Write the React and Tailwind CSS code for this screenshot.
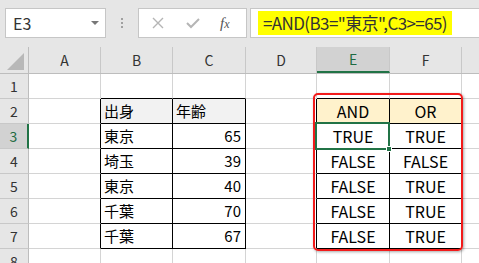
import React from 'react'

const cols = [
  { k: 'A', w: 'w-[72px]' },
  { k: 'B', w: 'w-[72px]' },
  { k: 'C', w: 'w-[73px]' },
  { k: 'D', w: 'w-[71px]' },
  { k: 'E', w: 'w-[73px]' },
  { k: 'F', w: 'w-[72px]' },
  { k: 'G', w: 'w-[72px]' },
]

const cells = {
  B2: { t: '出身', a: 'l' }, C2: { t: '年齢', a: 'l' },
  B3: { t: '東京', a: 'l' }, C3: { t: '65', a: 'r' },
  B4: { t: '埼玉', a: 'l' }, C4: { t: '39', a: 'r' },
  B5: { t: '東京', a: 'l' }, C5: { t: '40', a: 'r' },
  B6: { t: '千葉', a: 'l' }, C6: { t: '70', a: 'r' },
  B7: { t: '千葉', a: 'l' }, C7: { t: '67', a: 'r' },
  E2: { t: 'AND', a: 'c' }, F2: { t: 'OR', a: 'c' },
  E3: { t: 'TRUE', a: 'c' }, F3: { t: 'TRUE', a: 'c' },
  E4: { t: 'FALSE', a: 'c' }, F4: { t: 'FALSE', a: 'c' },
  E5: { t: 'FALSE', a: 'c' }, F5: { t: 'TRUE', a: 'c' },
  E6: { t: 'FALSE', a: 'c' }, F6: { t: 'TRUE', a: 'c' },
  E7: { t: 'FALSE', a: 'c' }, F7: { t: 'TRUE', a: 'c' },
}

const rows = [1, 2, 3, 4, 5, 6, 7, 8]
const tableCols = ['B', 'C', 'E', 'F']
const inTable = (c, r) => r >= 2 && r <= 7 && tableCols.includes(c)

const Cell = ({ c, ci, r }) => {
  const next = cols[ci + 1] ? cols[ci + 1].k : null
  const rb = inTable(c.k, r) || (next && inTable(next, r))
  const bb = inTable(c.k, r) || inTable(c.k, r + 1)
  const d = cells[c.k + r]
  let bg = 'bg-white'
  if (r === 2 && (c.k === 'B' || c.k === 'C')) bg = 'bg-[#f2f2f2]'
  if (r === 2 && (c.k === 'E' || c.k === 'F')) bg = 'bg-[#fff2cc]'
  const align = !d ? '' : d.a === 'l' ? 'justify-start pl-[3px] text-[15px]' : d.a === 'r' ? 'justify-end pr-[4px] text-[15px]' : 'justify-center text-[16px]'
  return (
    <div
      className={`${c.w} shrink-0 h-full flex items-center border-r border-b ${rb ? 'border-r-black' : 'border-r-[#d4d4d4]'} ${bb ? 'border-b-black' : 'border-b-[#d4d4d4]'} ${bg} ${align} text-black`}
    >
      {d ? d.t : ''}
    </div>
  )
}

export default function App() {
  return (
    <div className="relative w-[479px] h-[263px] overflow-hidden bg-white" style={{ fontFamily: '"Noto Sans CJK JP", "Noto Sans", sans-serif' }}>
      {/* toolbar */}
      <div className="h-[47px] bg-[#e6e6e6] flex items-start pt-[8px] pl-[5px]">
        <div className="w-[101px] h-[30px] bg-white border border-[#c6c6c6] flex items-center justify-between pl-[7px] pr-[6px]">
          <span className="text-[16px] text-[#333]">E3</span>
          <span className="w-0 h-0 border-l-[4px] border-r-[4px] border-t-[4px] border-l-transparent border-r-transparent border-t-[#777]"></span>
        </div>
        <div className="w-[32px] h-[30px] flex flex-col items-center justify-center gap-[2px]">
          <span className="w-[2px] h-[2px] bg-[#a0a0a0]"></span>
          <span className="w-[2px] h-[2px] bg-[#a0a0a0]"></span>
          <span className="w-[2px] h-[2px] bg-[#a0a0a0]"></span>
        </div>
        <div className="w-[109px] h-[30px] bg-white border border-[#c6c6c6] flex items-center">
          <svg width="12" height="12" viewBox="0 0 12 12" className="ml-[13px]">
            <path d="M1 1 L11 11 M11 1 L1 11" stroke="#b5b5b5" strokeWidth="1.4" />
          </svg>
          <svg width="14" height="12" viewBox="0 0 14 12" className="ml-[22px]">
            <path d="M1 6 L5 10 L13 2" stroke="#b5b5b5" strokeWidth="2" fill="none" />
          </svg>
          <span className="ml-[20px] text-[15px] italic text-[#555]" style={{ fontFamily: '"Liberation Serif", serif' }}>f<span className="text-[12px]">x</span></span>
        </div>
        <div className="ml-[3px] flex-1 h-[30px] bg-white border border-[#c6c6c6] border-r-0 flex items-center pl-[7px]">
          <span className="h-[24px] bg-[#ffff00] flex items-center px-[5px] text-[17px] tracking-[-0.6px] text-[#333] whitespace-nowrap">=AND(B3="東京",C3&gt;=65)</span>
        </div>
      </div>

      {/* column header */}
      <div className="h-[27px] flex bg-[#e6e6e6] border-b border-[#bdbdbd]">
        <div className="w-[29px] shrink-0 h-full border-r border-[#bdbdbd] relative">
          <svg width="17" height="17" viewBox="0 0 17 17" className="absolute right-[4px] bottom-[3px]">
            <polygon points="17,0 17,17 0,17" fill="#b8b8b8" />
          </svg>
        </div>
        {cols.map((c) => (
          <div
            key={c.k}
            className={`${c.w} shrink-0 h-full flex items-center justify-center border-r border-[#c8c8c8] text-[14px] ${c.k === 'E' ? 'bg-[#d2d2d2] text-[#1e6b41] border-b-2 border-b-[#217346]' : 'text-[#333]'}`}
          >
            {c.k}
          </div>
        ))}
      </div>

      {/* rows */}
      {rows.map((r) => (
        <div key={r} className="h-[25px] flex">
          <div
            className={`w-[29px] shrink-0 h-full flex items-center justify-center border-b border-b-[#c8c8c8] text-[14px] ${r === 3 ? 'bg-[#d2d2d2] text-[#1e6b41] border-r-2 border-r-[#217346]' : 'bg-[#e6e6e6] text-[#333] border-r border-r-[#bdbdbd]'}`}
          >
            {r}
          </div>
          {cols.map((c, ci) => (
            <Cell key={c.k} c={c} ci={ci} r={r} />
          ))}
        </div>
      ))}

      {/* red highlight */}
      <div className="absolute left-[313px] top-[93px] w-[150px] h-[158px] border-2 border-[#f21b1b] rounded-[5px] shadow-[1px_1px_3px_rgba(0,0,0,0.35)]"></div>

      {/* selection */}
      <div className="absolute left-[315px] top-[122px] w-[75px] h-[28px] border-2 border-[#217346]"></div>
      <div className="absolute left-[386px] top-[146px] w-[6px] h-[6px] bg-[#217346] border border-white"></div>
    </div>
  )
}
